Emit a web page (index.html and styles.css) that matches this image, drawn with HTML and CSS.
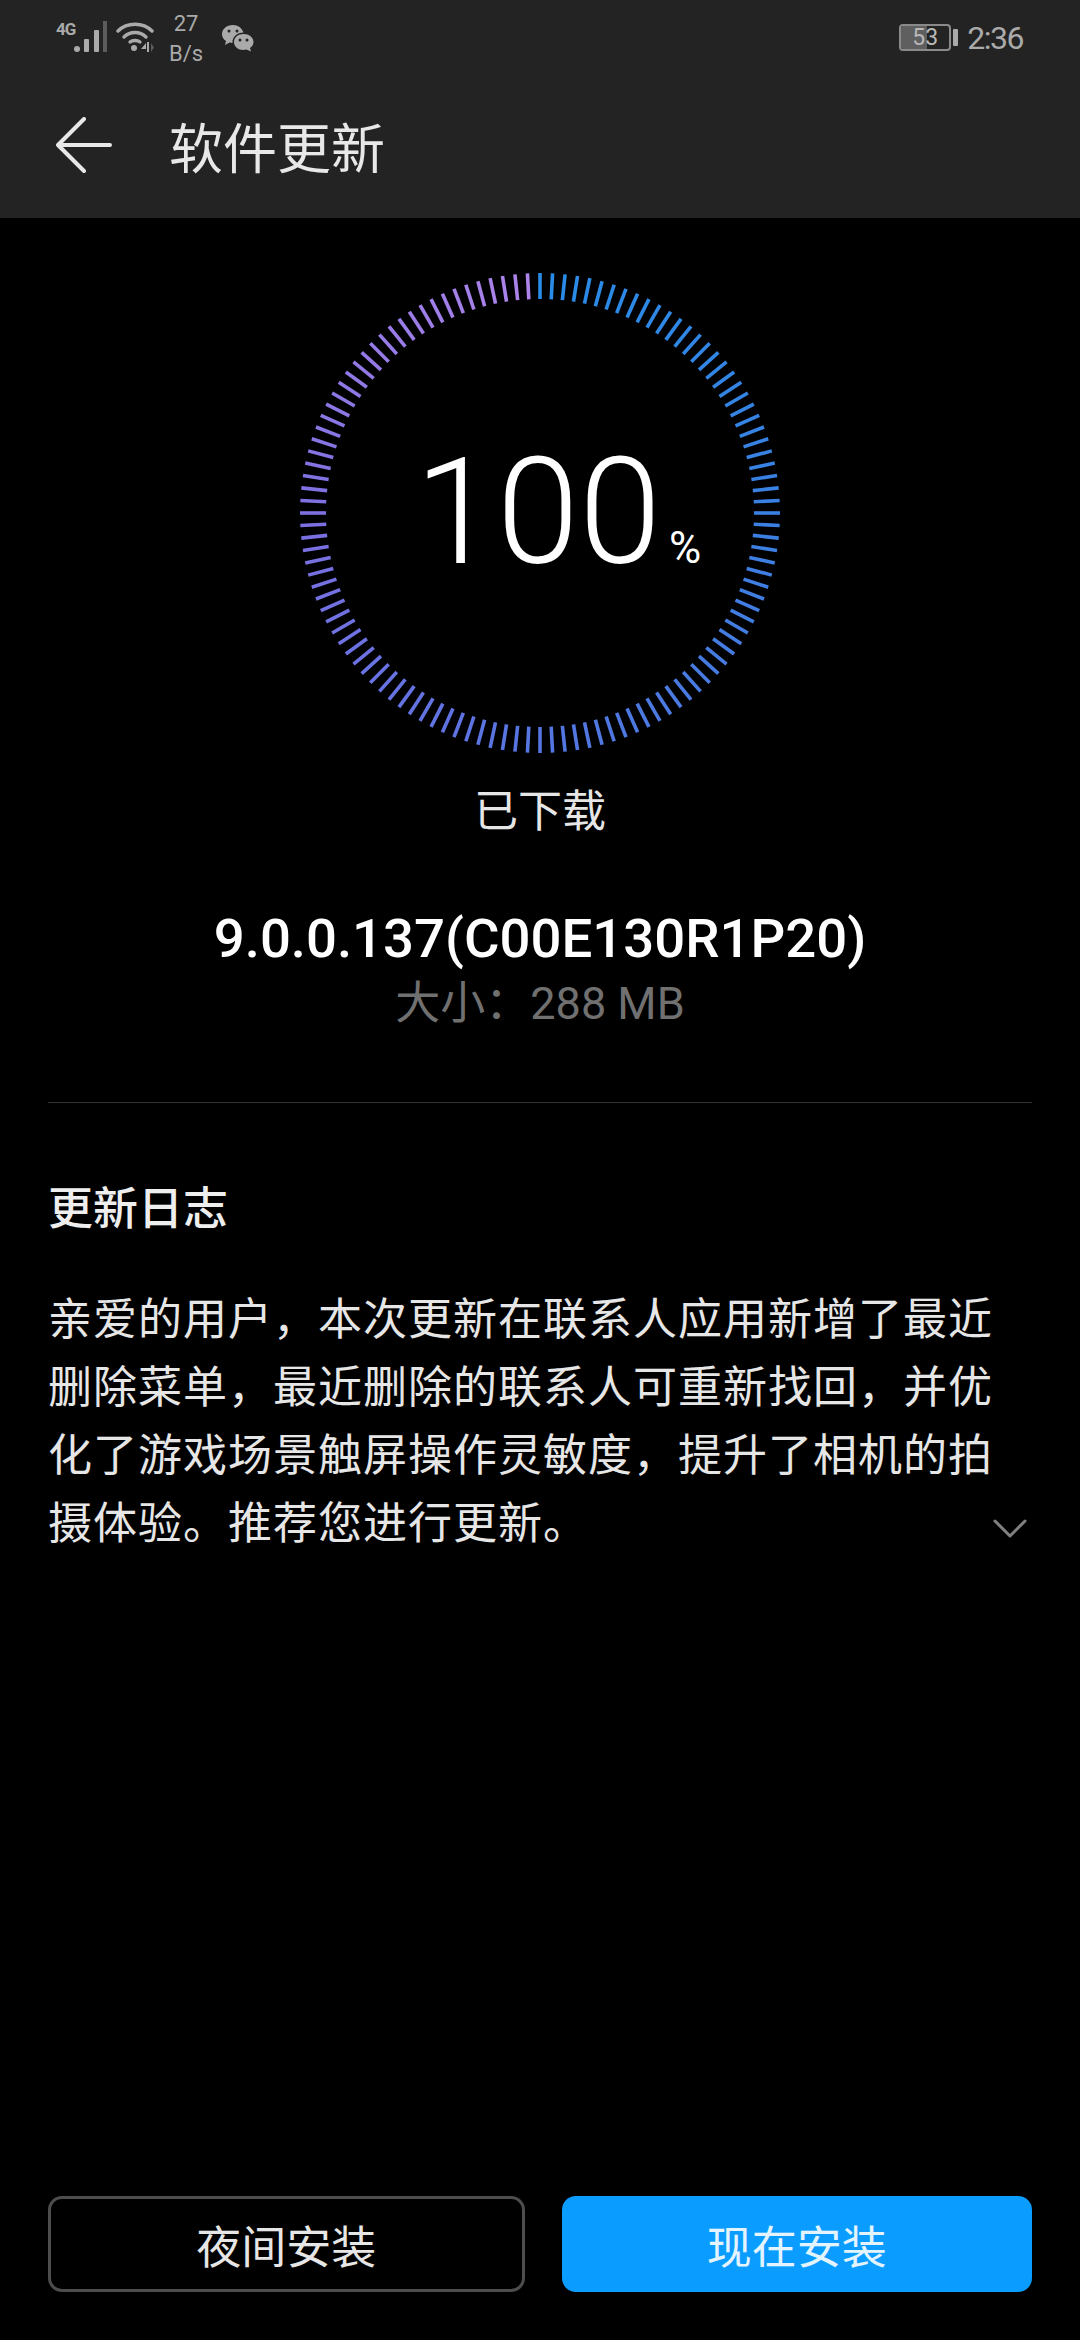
FILE: index.html
```html
<!DOCTYPE html>
<html lang="zh-CN">
<head>
  <meta charset="UTF-8">
  <title>软件更新</title>
  <link rel="stylesheet" href="styles.css">
</head>
<body>
  <div class="topbar">
    <div class="status">
      <div class="status-left">
        <span class="net">4G</span>
        <svg class="signal" width="34" height="32" viewBox="0 0 34 32">
          <circle cx="3" cy="28" r="3" fill="#aaa"/>
          <rect x="10" y="18" width="5" height="13" rx="1" fill="#aaa"/>
          <rect x="20" y="9" width="5" height="22" rx="1" fill="#aaa"/>
          <rect x="29" y="0" width="4" height="31" fill="#5c5c5c"/>
        </svg>
        <svg class="wifi" width="38" height="32" viewBox="0 0 38 32" fill="none" stroke="#aaa" stroke-width="3.4" stroke-linecap="round">
          <path d="M2 10C11 1 27 1 36 10"/>
          <path d="M8 16C14 10 24 10 30 16"/>
          <path d="M14 21C16.500 19 21.500 19 24 21"/>
          <circle cx="18" cy="27" r="3" fill="#aaa" stroke="none"/>
          <path d="M30 22L25 28H30ZM31 21H33V31H31Z" fill="#aaa" stroke="none"/>
          <path d="M35 22L38 26.500L35 31Z" fill="#5c5c5c" stroke="none"/>
        </svg>
        <div class="speed"><span>27</span><span>B/s</span></div>
        <svg class="wechat" width="33" height="28" viewBox="0 0 33 28">
          <path d="M12 1C5.500 1 1 5 1 10C1 13 2.500 15.500 5 17L4 21L8.500 18.500C9.500 18.800 10.500 19 11.500 19C11 13 16 8.500 22.500 8.500C21 4 17 1 12 1Z" fill="#aaa"/>
          <path d="M22.500 10C17 10 13 13.500 13 18C13 22.500 17 26 22.500 26C23.500 26 24.500 25.800 25.500 25.500L30 27.500L29 24C31 22.500 32.500 20.500 32.500 18C32.500 13.500 28 10 22.500 10Z" fill="#aaa"/>
          <circle cx="8" cy="7" r="1.500" fill="#222322"/>
          <circle cx="16" cy="7" r="1.500" fill="#222322"/>
          <circle cx="19" cy="16" r="1.500" fill="#222322"/>
          <circle cx="26" cy="16" r="1.500" fill="#222322"/>
        </svg>
      </div>
      <div class="status-right">
        <div class="battery"><div class="battery-fill"></div><span class="battery-num">53</span></div>
        <div class="battery-nub"></div>
        <span class="clock">2:36</span>
      </div>
    </div>
    <header>
      <svg class="back" width="56" height="56" viewBox="0 0 56 56" fill="none" stroke="#e8e8e8" stroke-width="4" stroke-linecap="round" stroke-linejoin="round">
        <path d="M28 2L2 28L28 54M2 28H54"/>
      </svg>
      <h1>软件更新</h1>
    </header>
  </div>

  <main>
    <div class="ring-wrap">
      <svg id="ring" width="484" height="484" viewBox="-242 -242 484 484"></svg>
      <div class="percent"><span class="num">100</span><span class="sign">%</span></div>
    </div>
    <div class="done">已下载</div>
    <div class="version">9.0.0.137(C00E130R1P20)</div>
    <div class="size">大小：288 MB</div>
    <hr class="divider">
    <h2>更新日志</h2>
    <p class="log">亲爱的用户，本次更新在联系人应用新增了最近<br>删除菜单，最近删除的联系人可重新找回，并优<br>化了游戏场景触屏操作灵敏度，提升了相机的拍<br>摄体验。推荐您进行更新。</p>
    <div class="more">
      <svg width="34" height="20" viewBox="0 0 34 20" fill="none" stroke="#808080" stroke-width="3" stroke-linecap="round" stroke-linejoin="round">
        <path d="M2 2L17 17L32 2"/>
      </svg>
    </div>
  </main>

  <footer>
    <button class="btn btn-night">夜间安装</button>
    <button class="btn btn-now">现在安装</button>
  </footer>

  <script src="ring.js"></script>
</body>
</html>
```

FILE: styles.css
```css
* {
  box-sizing: border-box;
}
html, body {
  height: 100%;
}
body {
  margin: 0;
  height: 2340px;
  display: flex;
  flex-direction: column;
  background: #000;
  color: #e6e6e6;
  font-family: 'Roboto', 'Noto Sans CJK SC', sans-serif;
}
.topbar {
  height: 218px;
  background: #222322;
}
.status {
  height: 76px;
  padding: 0 57px 0 56px;
  display: flex;
  justify-content: space-between;
  color: #aaa;
}
.status-left, .status-right {
  display: flex;
  align-items: flex-start;
}
.net {
  width: 18px;
  margin-top: 19px;
  font-size: 17px;
  font-weight: 700;
  letter-spacing: -1px;
}
.signal {
  margin-top: 21px;
}
.wifi {
  margin: 21px 0 0 8px;
}
.speed {
  width: 44px;
  margin: 9px 2px 0 10px;
  display: flex;
  flex-direction: column;
  align-items: center;
  font-size: 22px;
  line-height: 30px;
}
.wechat {
  margin: 24px 0 0 11px;
}
.battery {
  position: relative;
  width: 52px;
  height: 27px;
  margin-top: 24px;
  border: 2px solid #8a8a8a;
  border-radius: 4px;
  overflow: hidden;
}
.battery-fill {
  width: 53%;
  height: 100%;
  background: #5f5f5f;
}
.battery-num {
  position: absolute;
  inset: 0;
  text-align: center;
  font-size: 23px;
  line-height: 23px;
  color: #b8b8b8;
}
.battery-nub {
  width: 5px;
  height: 17px;
  margin: 29px 0 0 2px;
  border-radius: 1px;
  background: #aaa;
}
.clock {
  margin: 20px 0 0 9px;
  font-size: 32px;
  letter-spacing: -1.500px;
  line-height: 36px;
}
header {
  height: 142px;
  padding: 0 0 4px 56px;
  display: flex;
  align-items: center;
}
.back {
  flex: none;
}
h1 {
  margin: 0 0 0 57px;
  font-size: 54px;
  font-weight: 400;
  color: #e8e8e8;
}
main {
  flex: 1;
  padding: 0 48px;
  display: flex;
  flex-direction: column;
}
.ring-wrap {
  position: relative;
  width: 484px;
  height: 484px;
  margin: 53px auto 0;
}
#ring {
  display: block;
}
.percent {
  position: absolute;
  left: 0;
  right: 0;
  top: 154px;
  padding-left: 36px;
  text-align: center;
  white-space: nowrap;
  color: #fff;
  font-weight: 300;
}
.num {
  font-size: 148px;
  line-height: 176px;
}
.sign {
  margin-left: 8px;
  font-size: 44px;
  font-weight: 400;
}
.done {
  margin-top: 26px;
  text-align: center;
  font-size: 44px;
  line-height: 62px;
}
.version {
  margin-top: 62px;
  text-align: center;
  font-size: 54.500px;
  font-weight: 500;
  line-height: 66px;
  color: #fff;
}
.size {
  margin-top: 2px;
  text-align: center;
  font-size: 45px;
  line-height: 62px;
  color: #707070;
}
.divider {
  width: 100%;
  margin: 67px 0 0;
  border: 0;
  border-top: 1px solid #333;
}
h2 {
  margin: 77px 0 0;
  font-size: 45px;
  font-weight: 500;
  line-height: 60px;
  color: #eee;
}
.log {
  margin: 46px 0 0;
  font-size: 44px;
  line-height: 68px;
  letter-spacing: 1px;
  white-space: nowrap;
}
.more {
  margin-top: -39px;
  padding-right: 5px;
  display: flex;
  justify-content: flex-end;
}
footer {
  padding: 0 48px 48px;
  display: flex;
  gap: 37px;
}
.btn {
  flex: 1;
  height: 96px;
  padding: 0;
  border-radius: 14px;
  font-family: inherit;
  font-size: 45px;
  color: #e6e6e6;
}
.btn-night {
  background: #000;
  border: 3px solid #4d4d4d;
}
.btn-now {
  background: #0a9dff;
  border: none;
  color: #e4f4ff;
}
```

FILE: ring.js
```js
// 120 ticks, blue at the top going clockwise round to purple
const ring = document.getElementById("ring");
const stops = [
  [0, [41, 140, 232]],
  [0.25, [58, 128, 226]],
  [0.5, [84, 118, 226]],
  [0.75, [124, 112, 226]],
  [1, [172, 132, 234]]
];

function tickColor(t) {
  let i = 0;
  while (i < stops.length - 2 && t > stops[i + 1][0]) i++;
  const [t0, c0] = stops[i];
  const [t1, c1] = stops[i + 1];
  const k = (t - t0) / (t1 - t0);
  return `rgb(${c0.map((v, n) => Math.round(v + (c1[n] - v) * k)).join(",")})`;
}

for (let i = 0; i < 120; i++) {
  const a = i * 3 * Math.PI / 180;
  const s = Math.sin(a);
  const c = Math.cos(a);
  const tick = document.createElementNS("http://www.w3.org/2000/svg", "line");
  tick.setAttribute("x1", 214 * s);
  tick.setAttribute("y1", -214 * c);
  tick.setAttribute("x2", 240 * s);
  tick.setAttribute("y2", -240 * c);
  tick.setAttribute("stroke", tickColor(i / 119));
  tick.setAttribute("stroke-width", 3.6);
  ring.appendChild(tick);
}
```
